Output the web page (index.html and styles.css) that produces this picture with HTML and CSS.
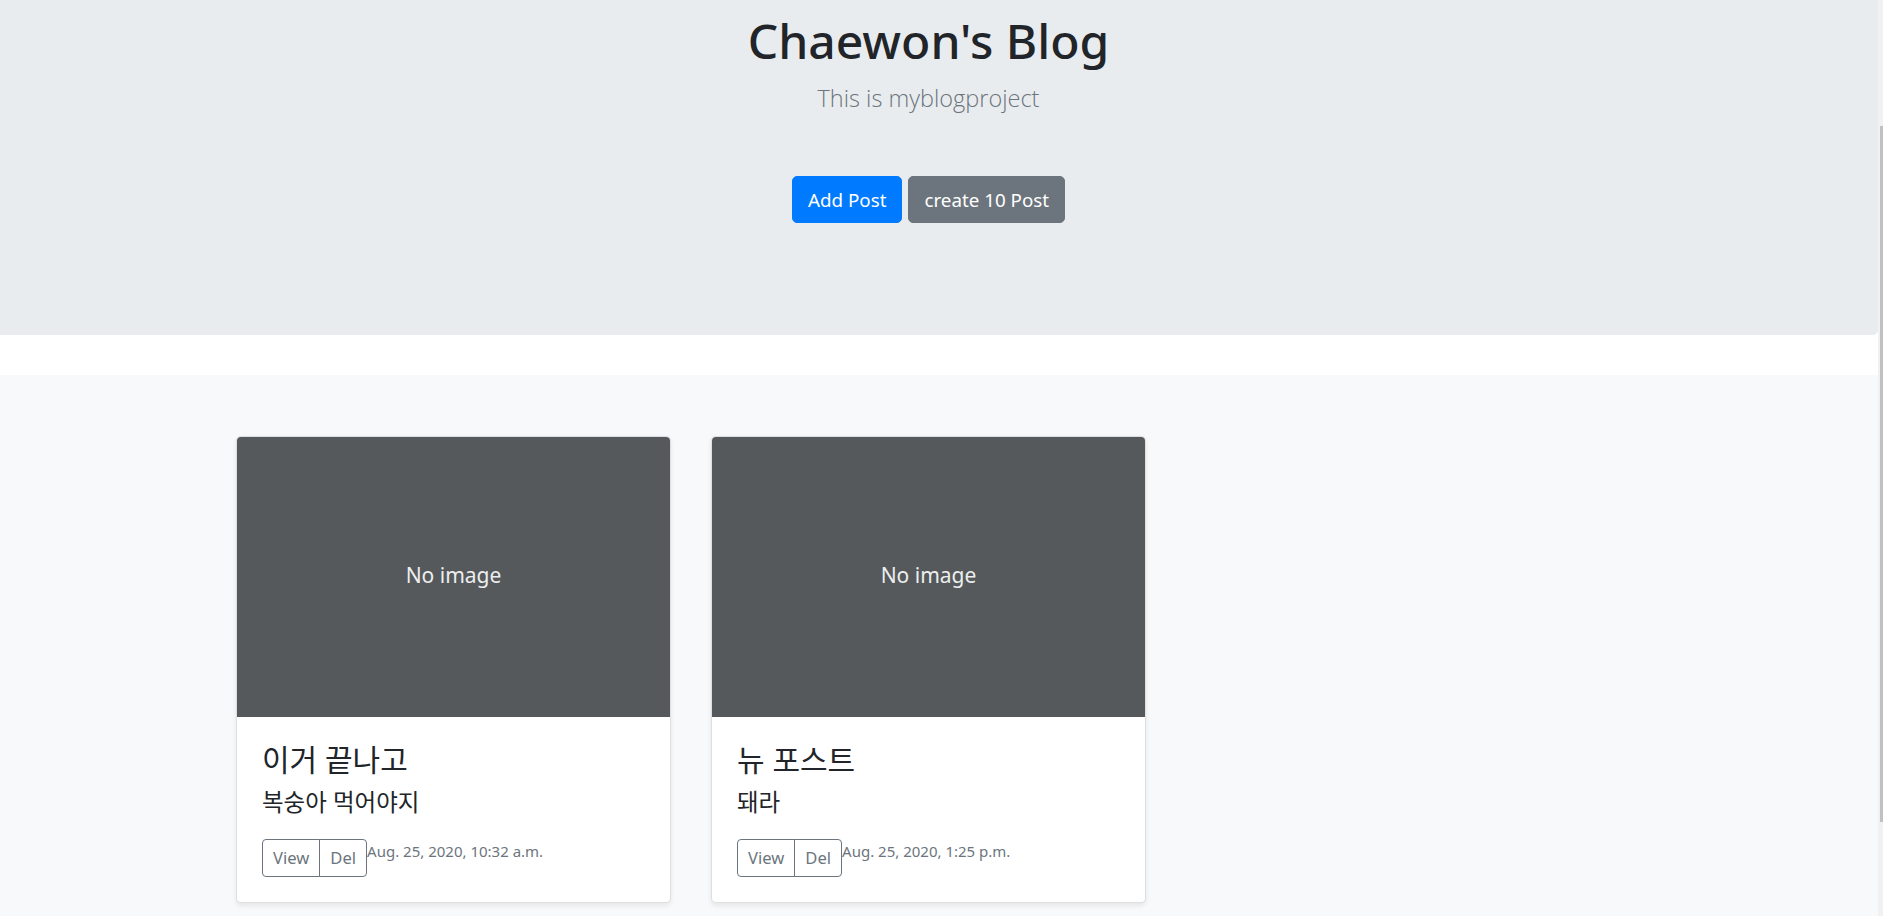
FILE: index.html
```html
<!DOCTYPE html>
<html lang="ko">
<head>
<meta charset="utf-8">
<title>Chaewon's Blog</title>
<link rel="stylesheet" href="styles.css">
</head>
<body>
<div class="page">
  <section class="jumbotron">
    <h1 class="jumbo-title">Chaewon's Blog</h1>
    <p class="lead">This is myblogproject</p>
    <div class="actions">
      <a class="btn btn-primary" href="#">Add Post</a>
      <a class="btn btn-secondary" href="#">create 10 Post</a>
    </div>
  </section>

  <main class="album">
    <div class="album-grid">
      <div class="card">
        <div class="thumb"><span>No image</span></div>
        <div class="card-body">
          <h4 class="card-title">이거 끝나고</h4>
          <p class="card-text">복숭아 먹어야지</p>
          <div class="card-foot">
            <div class="btn-group">
              <a class="btn-sm" href="#">View</a>
              <a class="btn-sm" href="#">Del</a>
            </div>
            <small class="date">Aug. 25, 2020, 10:32 a.m.</small>
          </div>
        </div>
      </div>
      <div class="card">
        <div class="thumb"><span>No image</span></div>
        <div class="card-body">
          <h4 class="card-title">뉴 포스트</h4>
          <p class="card-text">돼라</p>
          <div class="card-foot">
            <div class="btn-group">
              <a class="btn-sm" href="#">View</a>
              <a class="btn-sm" href="#">Del</a>
            </div>
            <small class="date">Aug. 25, 2020, 1:25 p.m.</small>
          </div>
        </div>
      </div>
    </div>
  </main>
</div>
<div class="scrollbar"><div class="scroll-thumb"></div></div>
</body>
</html>
```

FILE: styles.css
```css
* { box-sizing: border-box; }
html, body { margin: 0; padding: 0; }
body {
  font-family: "Noto Sans", "Noto Sans CJK KR", sans-serif;
  color: #212529;
  background: #fff;
  font-size: 20px;
  line-height: 1.5;
  height: 916px;
  overflow: hidden;
}
.page {
  width: 1878px;
}
.jumbotron {
  background: #e9ecef;
  border-radius: 0 0 5px 0;
  padding: 10px 21px 112px 0;
  text-align: center;
}
.jumbo-title {
  margin: 0;
  font-size: 48px;
  line-height: 62px;
  font-weight: 500;
  color: #212529;
}
.lead {
  margin: 9px 0 0;
  font-family: "Open Sans", "Noto Sans", sans-serif;
  font-size: 23.5px;
  line-height: 35px;
  font-weight: 300;
  color: #6c757d;
}
.actions {
  margin-top: 60px;
  display: flex;
  justify-content: center;
  gap: 6px;
}
.btn {
  display: inline-block;
  font-size: 18.8px;
  line-height: 30px;
  padding: 7.5px 15px;
  border: 1px solid transparent;
  border-radius: 5px;
  color: #fff;
  text-decoration: none;
}
.btn-primary { background: #007bff; border-color: #007bff; }
.btn-secondary { background: #6c757d; border-color: #6c757d; }

.album {
  margin-top: 40px;
  background: #f8f9fa;
  padding: 61px 21px 60px 0;
  min-height: 600px;
}
.album-grid {
  width: 1385px;
  margin: 0 auto;
  display: grid;
  grid-template-columns: repeat(3, 435px);
  column-gap: 40px;
}
.card {
  background: #fff;
  border: 1px solid rgba(0,0,0,.125);
  border-radius: 5px;
  box-shadow: 0 2.5px 5px rgba(0,0,0,.075);
  overflow: hidden;
}
.thumb {
  height: 280px;
  background: #55595c;
  color: #eceeef;
  display: flex;
  align-items: center;
  justify-content: center;
  font-size: 21px;
}
.thumb span { margin-top: -2px; }
.card-body {
  padding: 25px;
}
.card-title {
  margin: 0 0 8px;
  font-size: 30px;
  line-height: 36px;
  font-weight: 400;
}
.card-text {
  margin: 0 0 20px;
  font-size: 23.5px;
  line-height: 33px;
}
.card-foot {
  display: flex;
  align-items: flex-start;
}
.btn-group {
  display: flex;
}
.btn-sm {
  display: block;
  font-size: 16.6px;
  line-height: 26px;
  padding: 5px 10px;
  border: 1px solid #6c757d;
  color: #6c757d;
  text-decoration: none;
}
.btn-sm:first-child { border-radius: 4px 0 0 4px; }
.btn-sm + .btn-sm { margin-left: -1px; border-radius: 0 4px 4px 0; }
.date {
  margin-top: 2px;
  font-size: 15px;
  line-height: 21px;
  color: #6c757d;
}
.scrollbar {
  position: fixed;
  top: 0;
  right: 0;
  width: 5px;
  height: 100%;
  background: #f1f1f1;
}
.scroll-thumb {
  margin-top: 126px;
  margin-left: 2px;
  width: 3px;
  height: 696px;
  background: #c1c1c1;
}
```
